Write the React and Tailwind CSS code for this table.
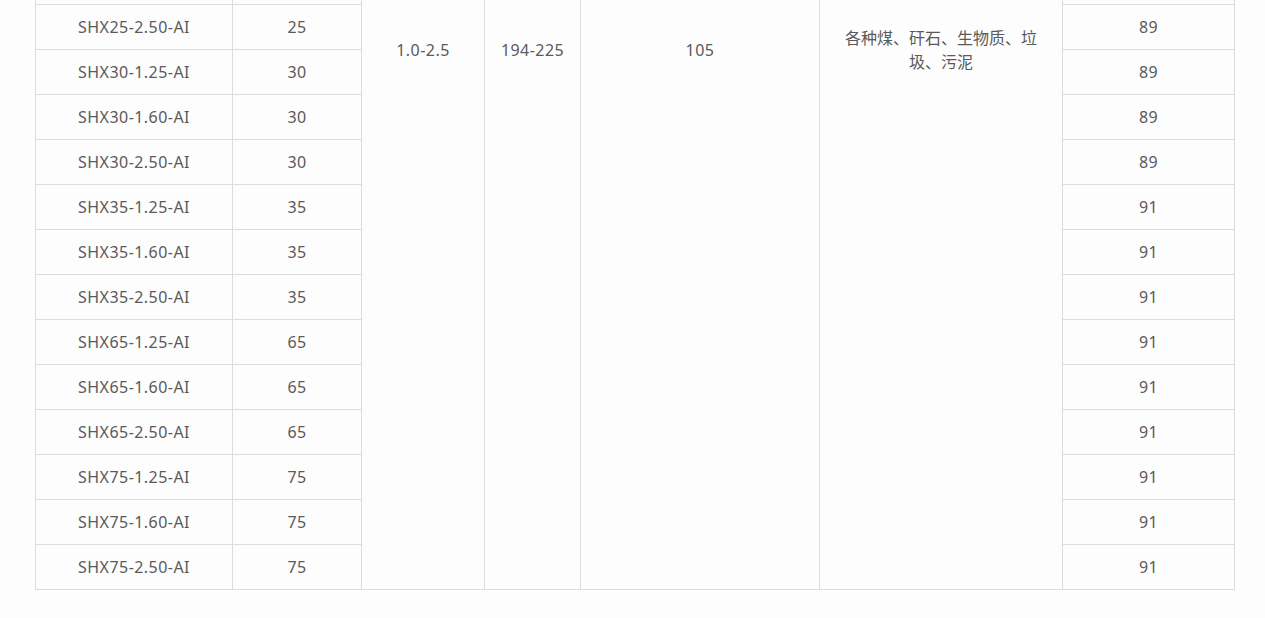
const models = [
  ['SHX25-2.50-AI', '25', '89'],
  ['SHX30-1.25-AI', '30', '89'],
  ['SHX30-1.60-AI', '30', '89'],
  ['SHX30-2.50-AI', '30', '89'],
  ['SHX35-1.25-AI', '35', '91'],
  ['SHX35-1.60-AI', '35', '91'],
  ['SHX35-2.50-AI', '35', '91'],
  ['SHX65-1.25-AI', '65', '91'],
  ['SHX65-1.60-AI', '65', '91'],
  ['SHX65-2.50-AI', '65', '91'],
  ['SHX75-1.25-AI', '75', '91'],
  ['SHX75-1.60-AI', '75', '91'],
  ['SHX75-2.50-AI', '75', '91'],
];

function StackCol({ width, values }) {
  return (
    <div className={`flex flex-col border-r border-[#dcdcdc] tracking-[0.45px] ${width}`}>
      <div className="h-[5px] border-b border-[#dcdcdc]" />
      {values.map((v, i) => (
        <div key={i} className="h-[45px] border-b border-[#dcdcdc] flex items-center justify-center">
          {v}
        </div>
      ))}
    </div>
  );
}

function MergedCol({ width, children, pad = 'pt-[38px] tracking-[0.45px]' }) {
  return (
    <div className={`border-r border-b border-[#dcdcdc] text-center ${width} ${pad}`}>
      {children}
    </div>
  );
}

export default function App() {
  return (
    <div className="min-h-screen bg-[#fdfdfd] font-['Noto_Sans','Noto_Sans_CJK_SC',sans-serif] text-[16px] leading-[24px] text-[#5a5a5a]">
      <div className="ml-[35px] w-[1200px] flex border-l border-[#dcdcdc]">
        <StackCol width="w-[197px]" values={models.map((m) => m[0])} />
        <StackCol width="w-[129px]" values={models.map((m) => m[1])} />
        <MergedCol width="w-[123px]">1.0-2.5</MergedCol>
        <MergedCol width="w-[96px]">194-225</MergedCol>
        <MergedCol width="w-[239px]">105</MergedCol>
        <MergedCol width="w-[243px] px-[20px]" pad="pt-[26px]">
          各种煤、矸石、生物质、垃圾、污泥
        </MergedCol>
        <StackCol width="w-[172px]" values={models.map((m) => m[2])} />
      </div>
    </div>
  );
}
